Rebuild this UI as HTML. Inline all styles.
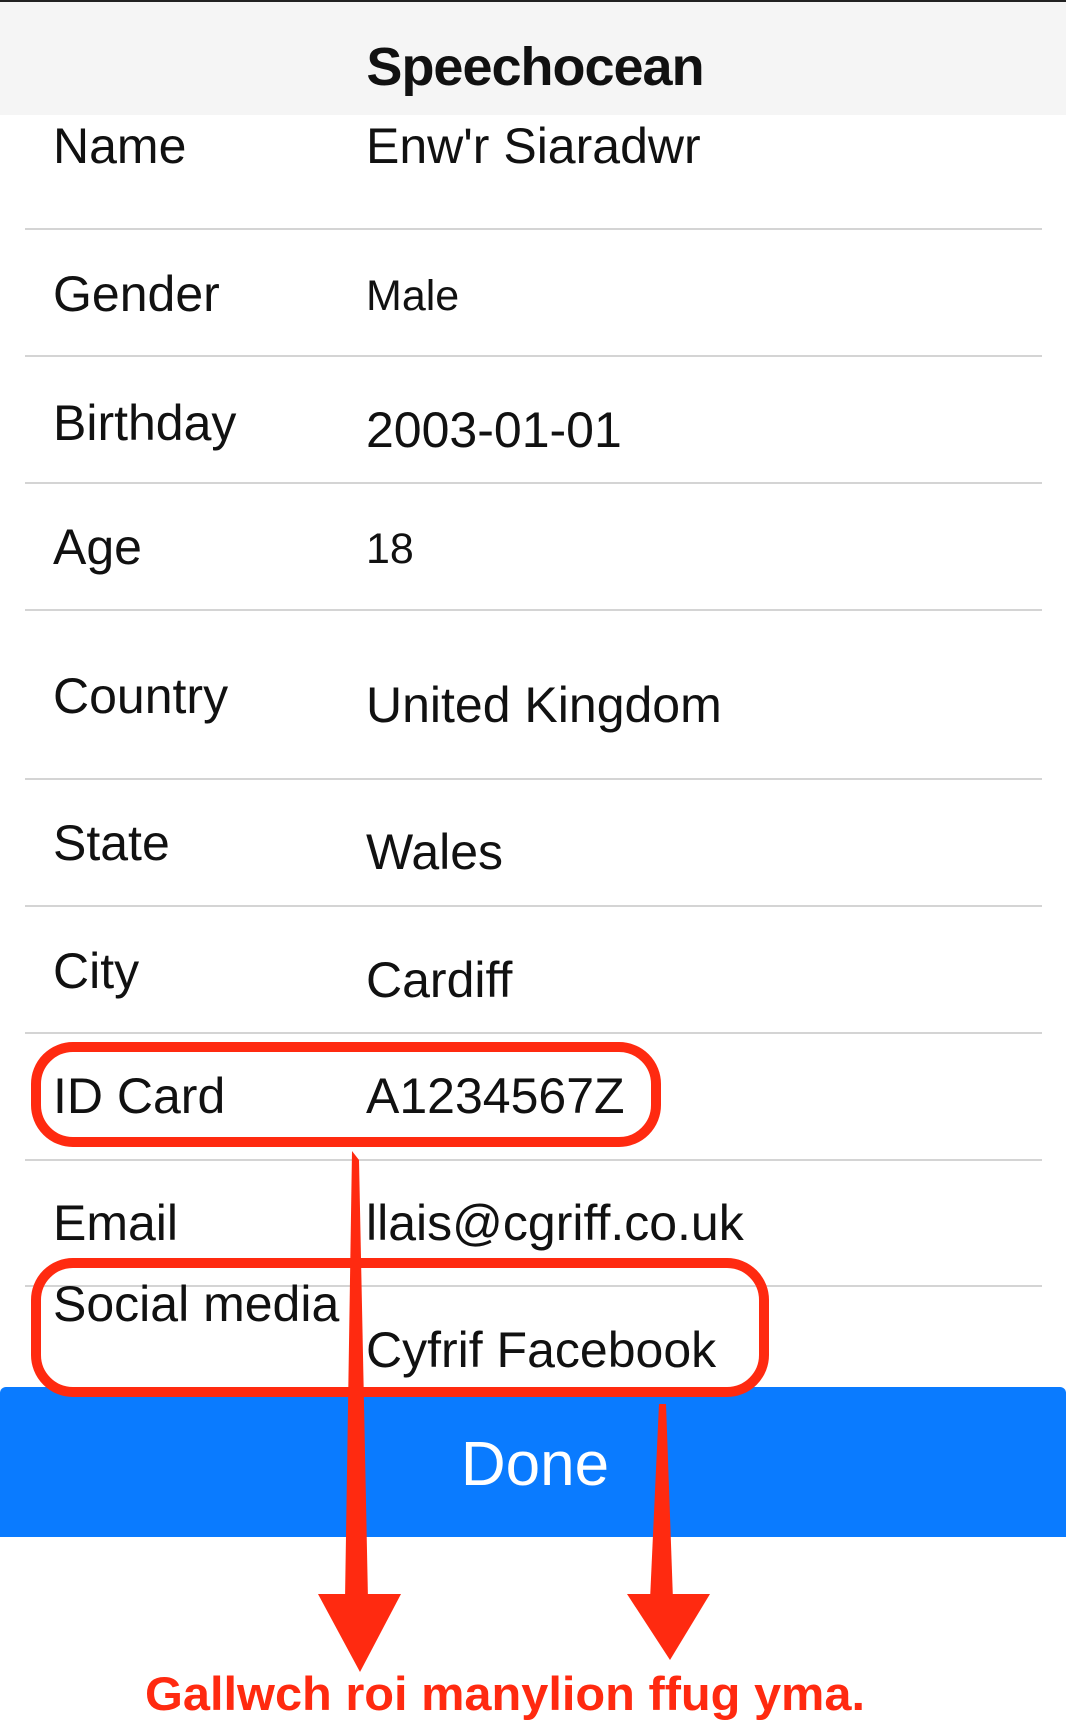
<!DOCTYPE html>
<html><head><meta charset="utf-8"><style>
body{margin:0;width:1066px;height:1736px;position:relative;overflow:hidden;background:#fff;font-family:"Liberation Sans",sans-serif;color:#111}
.t{position:absolute;white-space:nowrap;line-height:1}
.l{font-size:50px;left:53px}
.v{font-size:50px;left:366px}
.sep{position:absolute;left:25px;width:1017px;height:2px;background:#d4d4d4}
.box{position:absolute;border:10px solid #ff2a10;border-radius:42px;box-sizing:border-box}
</style></head><body>
<div style="position:absolute;left:0;top:0;width:1066px;height:2px;background:#222"></div>
<div style="position:absolute;left:0;top:2px;width:1066px;height:113px;background:#f5f5f5"></div>
<div class="t" style="left:0;width:1070px;text-align:center;top:40px;font-size:54px;font-weight:bold;letter-spacing:-1px">Speechocean</div>

<div class="t l" style="top:121px">Name</div><div class="t v" style="top:121px">Enw'r Siaradwr</div>
<div class="sep" style="top:228px"></div>
<div class="t l" style="top:269px">Gender</div><div class="t v" style="top:275px;font-size:43px">Male</div>
<div class="sep" style="top:355px"></div>
<div class="t l" style="top:398px">Birthday</div><div class="t v" style="top:405px">2003-01-01</div>
<div class="sep" style="top:482px"></div>
<div class="t l" style="top:522px">Age</div><div class="t v" style="top:528px;font-size:43px">18</div>
<div class="sep" style="top:609px"></div>
<div class="t l" style="top:671px">Country</div><div class="t v" style="top:680px">United Kingdom</div>
<div class="sep" style="top:778px"></div>
<div class="t l" style="top:818px">State</div><div class="t v" style="top:827px">Wales</div>
<div class="sep" style="top:905px"></div>
<div class="t l" style="top:946px">City</div><div class="t v" style="top:955px">Cardiff</div>
<div class="sep" style="top:1032px"></div>
<div class="t l" style="top:1071px">ID Card</div><div class="t v" style="top:1071px">A1234567Z</div>
<div class="sep" style="top:1159px"></div>
<div class="t l" style="top:1198px">Email</div><div class="t v" style="top:1198px">llais@cgriff.co.uk</div>
<div class="sep" style="top:1285px"></div>
<div class="t l" style="top:1279px">Social media</div><div class="t v" style="top:1325px">Cyfrif Facebook</div>

<div style="position:absolute;left:0;top:1387px;width:1066px;height:150px;background:#0a7bff;border-radius:6px 6px 0 0"></div>
<div class="t" style="left:0;width:1070px;text-align:center;top:1434px;font-size:62px;color:#fff">Done</div>

<div class="box" style="left:31px;top:1042px;width:630px;height:105px"></div>
<div class="box" style="left:31px;top:1258px;width:738px;height:139px"></div>

<svg width="1066" height="1736" style="position:absolute;left:0;top:0">
<path d="M352 1151 L359 1160 L368 1600 L345 1600 Z" fill="#ff2a10"/>
<path d="M318 1594 L401 1594 L360 1672 Z" fill="#ff2a10"/>
<path d="M659 1404 L666 1404 L673 1600 L650 1600 Z" fill="#ff2a10"/>
<path d="M627 1594 L710 1594 L670 1660 Z" fill="#ff2a10"/>
<text x="505" y="1710" text-anchor="middle" font-family="Liberation Sans" font-weight="bold" font-size="47" fill="#ff2a10" stroke="#fff" stroke-width="5" paint-order="stroke" textLength="720" lengthAdjust="spacingAndGlyphs">Gallwch roi manylion ffug yma.</text>
</svg>
</body></html>
